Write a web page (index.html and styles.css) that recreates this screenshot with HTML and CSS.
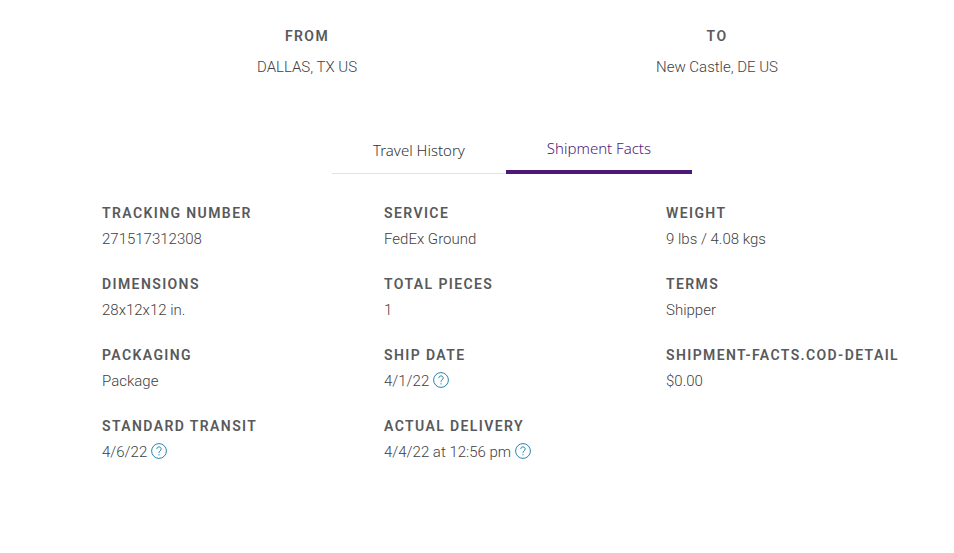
FILE: index.html
```html
<!DOCTYPE html>
<html lang="en">
<head>
    <meta charset="UTF-8">
    <meta name="viewport" content="width=device-width, initial-scale=1.0">
    <title>Shipment Facts</title>
    <link rel="stylesheet" href="styles.css">
</head>
<body>
    <svg class="icon-defs" width="0" height="0" aria-hidden="true">
        <symbol id="icon-help" viewBox="0 0 16 16">
            <circle cx="8" cy="8" r="7.4"/>
            <path d="M5.8 6.1C5.8 4.7 6.7 3.9 8 3.9s2.2.8 2.2 2c0 1-.6 1.5-1.2 2.1-.6.5-1 .9-1 1.8v.3M8 11.2v1.2"/>
        </symbol>
    </svg>
    <main class="container">
        <section class="route">
            <div class="route-stop">
                <h2 class="label">FROM</h2>
                <p class="value">DALLAS, TX US</p>
            </div>
            <div class="route-stop">
                <h2 class="label">TO</h2>
                <p class="value">New Castle, DE US</p>
            </div>
        </section>

        <div class="tabs" role="tablist">
            <button class="tab" type="button" role="tab" aria-selected="false">Travel History</button>
            <button class="tab tab-active" type="button" role="tab" aria-selected="true">Shipment Facts</button>
        </div>
    </main>

    <dl class="facts">
        <div class="fact">
            <dt class="label">TRACKING NUMBER</dt>
            <dd class="value">271517312308</dd>
        </div>
        <div class="fact">
            <dt class="label">SERVICE</dt>
            <dd class="value">FedEx Ground</dd>
        </div>
        <div class="fact">
            <dt class="label">WEIGHT</dt>
            <dd class="value">9 lbs / 4.08 kgs</dd>
        </div>
        <div class="fact">
            <dt class="label">DIMENSIONS</dt>
            <dd class="value">28x12x12 in.</dd>
        </div>
        <div class="fact">
            <dt class="label">TOTAL PIECES</dt>
            <dd class="value">1</dd>
        </div>
        <div class="fact">
            <dt class="label">TERMS</dt>
            <dd class="value">Shipper</dd>
        </div>
        <div class="fact">
            <dt class="label">PACKAGING</dt>
            <dd class="value">Package</dd>
        </div>
        <div class="fact">
            <dt class="label">SHIP DATE</dt>
            <dd class="value">4/1/22 <button class="help" type="button" aria-label="Help"><svg><use href="#icon-help"/></svg></button></dd>
        </div>
        <div class="fact">
            <dt class="label">SHIPMENT-FACTS.COD-DETAIL</dt>
            <dd class="value">$0.00</dd>
        </div>
        <div class="fact">
            <dt class="label">STANDARD TRANSIT</dt>
            <dd class="value">4/6/22 <button class="help" type="button" aria-label="Help"><svg><use href="#icon-help"/></svg></button></dd>
        </div>
        <div class="fact">
            <dt class="label">ACTUAL DELIVERY</dt>
            <dd class="value">4/4/22 at 12:56 pm <button class="help" type="button" aria-label="Help"><svg><use href="#icon-help"/></svg></button></dd>
        </div>
    </dl>
</body>
</html>
```

FILE: styles.css
```css
body {
    margin: 0;
    font-family: Roboto, Arial, sans-serif;
    color: #58595b;
    background-color: #fff;
}
.icon-defs {
    position: absolute;
}
.container {
    padding: 26px 32px 0 102px;
}
.label {
    margin: 0;
    font-size: 14px;
    line-height: 20px;
    font-weight: 600;
    letter-spacing: 0.1em;
}
.value {
    margin: 0;
    font-size: 15px;
    line-height: 20px;
    font-weight: 300;
    color: #414143;
}
.route {
    display: grid;
    grid-template-columns: 1fr 1fr;
    text-align: center;
}
.route-stop .value {
    margin-top: 11px;
}
.tabs {
    display: flex;
    justify-content: center;
    margin-top: 49px;
}
.tab {
    height: 48px;
    padding: 0 41px;
    border: none;
    border-bottom: 1px solid #e3e3e3;
    background: none;
    font-family: "Noto Sans", sans-serif;
    font-size: 15px;
    font-weight: 350;
    color: #333;
    cursor: pointer;
}
.tab-active {
    border-bottom: 4px solid #4d1979;
    color: #4d1979;
}
.facts {
    display: grid;
    grid-template-columns: repeat(3, 1fr);
    row-gap: 25px;
    margin: 0;
    padding: 29px 6px 40px 102px;
}
.fact .value {
    margin-top: 6px;
}
.help {
    width: 16px;
    height: 16px;
    padding: 0;
    border: none;
    background: none;
    vertical-align: -2px;
    cursor: pointer;
}
.help svg {
    display: block;
    width: 16px;
    height: 16px;
    fill: none;
    stroke: #2a86ad;
}
```
